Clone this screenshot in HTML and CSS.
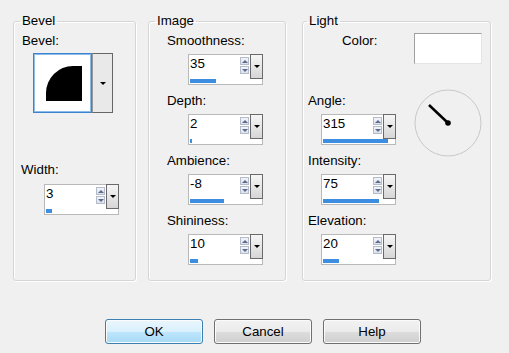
FILE: index.html
```html
<!DOCTYPE html>
<html>
<head>
    <title>Bevel</title>
    <link rel="stylesheet" href="styles.css">
</head>
<body>
    <div class="dialog">
        <div class="groups">
            <fieldset class="group group-bevel">
                <legend>Bevel</legend>
                <div class="label">Bevel:</div>
                <div class="picker">
                    <div class="picker-img">
                        <svg width="57" height="58" viewBox="0 0 57 58">
                            <path d="M12,47 L12,39 A27,27 0 0 1 39,12 L48,12 L48,47 Z" fill="#000"/>
                        </svg>
                    </div>
                    <div class="picker-drop"><span class="tri"></span></div>
                </div>
                <div class="label label-width">Width:</div>
                <div class="spin">
                    <div class="spin-row">
                        <span class="val">3</span>
                        <div class="arrows"><span class="up"></span><span class="dn"></span></div>
                        <div class="drop"><span class="tri"></span></div>
                    </div>
                    <div class="track"><div class="fill" style="width:6px"></div></div>
                </div>
            </fieldset>

            <fieldset class="group group-image">
                <legend>Image</legend>
                <div class="label">Smoothness:</div>
                <div class="spin">
                    <div class="spin-row">
                        <span class="val">35</span>
                        <div class="arrows"><span class="up"></span><span class="dn"></span></div>
                        <div class="drop"><span class="tri"></span></div>
                    </div>
                    <div class="track"><div class="fill" style="width:26px"></div></div>
                </div>
                <div class="label">Depth:</div>
                <div class="spin">
                    <div class="spin-row">
                        <span class="val">2</span>
                        <div class="arrows"><span class="up"></span><span class="dn"></span></div>
                        <div class="drop"><span class="tri"></span></div>
                    </div>
                    <div class="track"><div class="fill" style="width:2px"></div></div>
                </div>
                <div class="label">Ambience:</div>
                <div class="spin">
                    <div class="spin-row">
                        <span class="val">-8</span>
                        <div class="arrows"><span class="up"></span><span class="dn"></span></div>
                        <div class="drop"><span class="tri"></span></div>
                    </div>
                    <div class="track"><div class="fill" style="width:34px"></div></div>
                </div>
                <div class="label">Shininess:</div>
                <div class="spin">
                    <div class="spin-row">
                        <span class="val">10</span>
                        <div class="arrows"><span class="up"></span><span class="dn"></span></div>
                        <div class="drop"><span class="tri"></span></div>
                    </div>
                    <div class="track"><div class="fill" style="width:8px"></div></div>
                </div>
            </fieldset>

            <fieldset class="group group-light">
                <legend>Light</legend>
                <div class="color-row">
                    <div class="label label-color">Color:</div>
                    <div class="swatch"></div>
                </div>
                <div class="light-body">
                    <div class="light-col">
                        <div class="label">Angle:</div>
                        <div class="spin">
                            <div class="spin-row">
                                <span class="val">315</span>
                                <div class="arrows"><span class="up"></span><span class="dn"></span></div>
                                <div class="drop"><span class="tri"></span></div>
                            </div>
                            <div class="track"><div class="fill" style="width:65px"></div></div>
                        </div>
                        <div class="label">Intensity:</div>
                        <div class="spin">
                            <div class="spin-row">
                                <span class="val">75</span>
                                <div class="arrows"><span class="up"></span><span class="dn"></span></div>
                                <div class="drop"><span class="tri"></span></div>
                            </div>
                            <div class="track"><div class="fill" style="width:56px"></div></div>
                        </div>
                        <div class="label">Elevation:</div>
                        <div class="spin">
                            <div class="spin-row">
                                <span class="val">20</span>
                                <div class="arrows"><span class="up"></span><span class="dn"></span></div>
                                <div class="drop"><span class="tri"></span></div>
                            </div>
                            <div class="track"><div class="fill" style="width:16px"></div></div>
                        </div>
                    </div>
                    <div class="dial">
                        <svg width="68" height="68" viewBox="0 0 68 68">
                            <circle cx="34" cy="34" r="33" fill="none" stroke="#c8c8c8" stroke-width="1"/>
                            <line x1="15" y1="16" x2="34" y2="34" stroke="#000" stroke-width="2.5"/>
                            <circle cx="34" cy="34" r="2.8" fill="#000"/>
                        </svg>
                    </div>
                </div>
            </fieldset>
        </div>

        <div class="buttons">
            <button class="btn btn-default">OK</button>
            <button class="btn">Cancel</button>
            <button class="btn">Help</button>
        </div>
    </div>
</body>
</html>
```

FILE: styles.css
```css
body {
    margin: 0;
    background-color: #f0f0f0;
    color: #000;
    font-family: "Liberation Sans", Arial, sans-serif;
    font-size: 13.3px;
}

.dialog {
    padding: 13px 0 0 13px;
}

.groups {
    display: flex;
}

.group {
    box-sizing: border-box;
    height: 268px;
    margin: 0;
    padding: 4px 0 0 0;
    min-width: 0;
    border: 1px solid #d5d5d5;
    border-radius: 3px;
    box-shadow: 1px 1px 0 #fff, inset 1px 1px 0 #fff;
    display: flex;
    flex-direction: column;
    align-items: flex-start;
}

.group legend {
    margin-left: 6px;
    padding: 0 2px;
    line-height: 16px;
}

.group-bevel {
    width: 123px;
}

.group-image {
    width: 138px;
    margin-left: 12px;
}

.group-light {
    width: 189px;
    margin-left: 16px;
}

.group-light legend {
    margin-left: 4px;
}

.label {
    line-height: 16px;
    white-space: nowrap;
}

/* bevel group */
.group-bevel .label {
    margin-left: 8px;
}

.picker {
    display: flex;
    margin: 4px 0 0 19px;
    height: 60px;
}

.picker-img {
    width: 59px;
    box-sizing: border-box;
    background: #fff;
    border: 1px solid #3b84d0;
    box-shadow: inset 0 0 0 1px #8dbbe9;
}

.picker-img svg {
    display: block;
}

.picker-drop {
    width: 21px;
    box-sizing: border-box;
    background: #e9e9e9;
    border: 1px solid #666;
    border-left-color: #9a9a9a;
    display: flex;
    align-items: center;
    justify-content: center;
}

.label-width {
    margin-top: 49px;
}

.group-bevel .label-width {
    margin-left: 7px;
}

.group-bevel .spin {
    margin: 6px 0 0 30px;
}

/* image group */
.group-image .label {
    margin-left: 18px;
}

.group-image .spin {
    margin-left: 39px;
}

.group-image .label + .spin,
.light-col .label + .spin {
    margin-top: 5px;
}

.group-image .spin + .label,
.light-col .spin + .label {
    margin-top: 8px;
}

/* light group */
.color-row {
    display: flex;
    align-self: stretch;
    height: 52px;
}

.label-color {
    margin-left: 39px;
}

.swatch {
    width: 68px;
    height: 31px;
    box-sizing: border-box;
    margin-left: auto;
    margin-right: 8px;
    background: #fff;
    border: 1px solid #e4e4e4;
    border-top-color: #a0a0a0;
    border-left-color: #a0a0a0;
}

.light-body {
    display: flex;
    align-self: stretch;
    align-items: flex-start;
}

.light-col {
    display: flex;
    flex-direction: column;
    align-items: flex-start;
}

.light-col .label {
    margin-left: 5px;
}

.light-col .label:first-child {
    margin-top: 8px;
}

.light-col .spin {
    margin-left: 18px;
}

.dial {
    margin: 4px 8px 0 auto;
}

.dial svg {
    display: block;
}

/* spin control */
.spin {
    width: 75px;
    height: 31px;
    box-sizing: border-box;
    border: 1px solid #b9b9b9;
    background: #fff;
}

.spin-row {
    display: flex;
    height: 24px;
}

.val {
    flex: 1;
    padding: 1px 0 0 1px;
    line-height: 16px;
}

.arrows {
    width: 9px;
    display: flex;
    flex-direction: column;
    gap: 1px;
    padding-top: 2px;
    margin-right: 1px;
}

.up,
.dn {
    height: 8px;
    box-sizing: border-box;
    border: 1px solid #b4bccb;
    background: linear-gradient(#f3f5f8, #dde2ea);
    display: flex;
    align-items: center;
    justify-content: center;
}

.up::after {
    content: "";
    border-left: 3px solid transparent;
    border-right: 3px solid transparent;
    border-bottom: 3px solid #5d6b91;
}

.dn::after {
    content: "";
    border-left: 3px solid transparent;
    border-right: 3px solid transparent;
    border-top: 3px solid #5d6b91;
}

.drop {
    width: 13px;
    box-sizing: border-box;
    margin: -1px -1px 0 0;
    height: 25px;
    border: 1px solid #6a6a6a;
    background: linear-gradient(#f6f6f6, #d6d6d6);
    display: flex;
    align-items: center;
    justify-content: center;
}

.tri {
    border-left: 3px solid transparent;
    border-right: 3px solid transparent;
    border-top: 3px solid #000;
}

.track {
    height: 5px;
    padding-left: 1px;
}

.fill {
    height: 4px;
    background: #3d8de0;
}

/* buttons */
.buttons {
    display: flex;
    gap: 11px;
    margin-top: 38px;
    padding-left: 92px;
}

.btn {
    width: 98px;
    height: 25px;
    font-family: "Liberation Sans", Arial, sans-serif;
    font-size: 13.3px;
    color: #000;
    border: 1px solid #707070;
    border-radius: 3px;
    background: linear-gradient(#f2f2f2 0%, #ebebeb 50%, #dddddd 51%, #cfcfcf 100%);
    box-shadow: inset 0 0 0 1px #fbfbfb;
    padding: 0;
}

.btn-default {
    border-color: #3c7fb1;
    background: linear-gradient(#eaf6fd 0%, #d9f0fc 50%, #bee6fd 51%, #a7d9f5 100%);
}
```
